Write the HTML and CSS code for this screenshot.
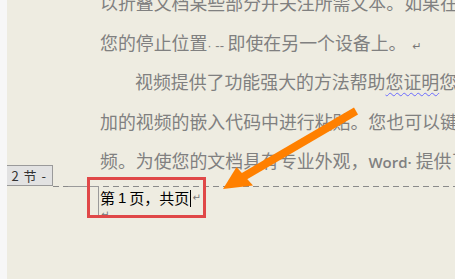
FILE: index.html
```html
<!DOCTYPE html>
<html lang="zh-CN">
<head>
<meta charset="utf-8">
<title>页眉页码</title>
<link rel="stylesheet" href="styles.css">
</head>
<body>
<div class="screen">
  <div class="strip"></div>
  <div class="page">
    <div class="body-text">
      <p class="line">以折叠文档某些部分并关注所需文本。如果在达到结尾处之前需要停止读取，Word 会记住</p>
      <p class="line">您的停止位置<span class="dots">· -- </span>即使在另一个设备上。<span class="mark">↵</span></p>
      <p class="line indent">视频提供了功能强大的方法帮助<span class="spell">您证明</span>您的观点。当您单击联机视频时，可以在想要添</p>
      <p class="line">加的视频的嵌入代码中进行粘贴。您也可以键入一个关键字以联机搜索最适合您的文档的视</p>
      <p class="line">频。为使您的文档具有专业外观，<span class="latin">Word·</span> 提供了页眉、页脚、封面和文本框设计</p>
    </div>
    <div class="section-break"></div>
    <div class="header-zone">
      <div class="corner"></div>
      <p class="header-line">第<span class="num">1</span>页，共页<span class="caret"></span><span class="hmark">↵</span></p>
      <p class="header-line2"><span class="hmark">↵</span></p>
    </div>
    <div class="section-label">第 2 节 -</div>
    <div class="highlight"></div>
    <svg class="arrow" width="448" height="279" viewBox="7 0 448 279">
      <line x1="356" y1="111" x2="243" y2="177" stroke="#ff8000" stroke-width="8"/>
      <polygon points="223,189 236.5,167 253,185.5" fill="#ff8000"/>
    </svg>
  </div>
</div>
</body>
</html>
```

FILE: styles.css
```css
html, body {
  margin: 0;
  padding: 0;
}
body {
  width: 455px;
  height: 279px;
  overflow: hidden;
  background: #eeece1;
}
.screen {
  display: flex;
  width: 455px;
  height: 279px;
  overflow: hidden;
}
.strip {
  width: 7px;
  flex: none;
  background: #f7f7f7;
}
.page {
  flex: 1;
  position: relative;
  background: #eeece1;
  overflow: hidden;
}
.body-text {
  margin-top: -17px;
  padding-left: 93px;
  font-family: "Noto Sans CJK SC", "Noto Sans", sans-serif;
  font-size: 17.9px;
  line-height: 39.5px;
  color: #808080;
  white-space: nowrap;
}
.line {
  margin: 0;
  height: 39.5px;
}
.indent {
  padding-left: 35px;
}
.dots {
  font-family: "Liberation Sans", sans-serif;
  font-size: 13px;
  white-space: pre;
}
.mark {
  font-family: "DejaVu Sans", sans-serif;
  font-size: 11px;
  color: #777;
  margin-left: 6px;
}
.spell {
  text-decoration: underline wavy #6a6aff;
  text-decoration-thickness: 1px;
  text-underline-offset: 3px;
}
.latin {
  font-family: "Open Sans", "Liberation Sans", sans-serif;
  font-weight: 600;
  font-size: 15px;
}
.section-break {
  margin-top: 5.75px;
  margin-left: 46px;
  height: 1px;
  background-image: repeating-linear-gradient(to right, #8a8a8a 0 6px, transparent 6px 10px);
}
.header-zone {
  position: relative;
  padding-left: 93px;
}
.corner {
  position: absolute;
  left: 61px;
  top: -1px;
  width: 30px;
  height: 30px;
  border-top: 1px solid #9a9a9a;
  border-right: 1px solid #9a9a9a;
}
.header-line {
  margin: 0;
  height: 22px;
  line-height: 22px;
  font-family: "Noto Sans CJK SC", sans-serif;
  font-size: 15px;
  color: #000;
  white-space: nowrap;
  display: flex;
  align-items: center;
}
.num {
  font-family: "Liberation Sans", sans-serif;
  margin: 0 3px;
}
.caret {
  width: 1px;
  height: 17px;
  background: #000;
  margin-left: 1px;
}
.hmark {
  font-family: "DejaVu Sans", sans-serif;
  font-size: 10px;
  color: #777;
  margin-left: 1px;
}
.header-line2 {
  margin: 0;
  height: 12px;
  line-height: 12px;
  display: flex;
  align-items: flex-end;
}
.section-label {
  position: absolute;
  left: -18px;
  top: 165px;
  width: 64px;
  height: 21px;
  box-sizing: border-box;
  border: 1px solid #9a9a9a;
  background: #e2e2e2;
  font-family: "Noto Sans CJK SC", sans-serif;
  font-size: 13px;
  line-height: 19px;
  color: #333;
  text-align: right;
  padding-right: 6px;
  white-space: pre;
  word-spacing: 2px;
  overflow: hidden;
}
.highlight {
  position: absolute;
  left: 80px;
  top: 177px;
  width: 119px;
  height: 41px;
  box-sizing: border-box;
  border: 3px solid #e04848;
}
.arrow {
  position: absolute;
  left: 0;
  top: 0;
}
```
